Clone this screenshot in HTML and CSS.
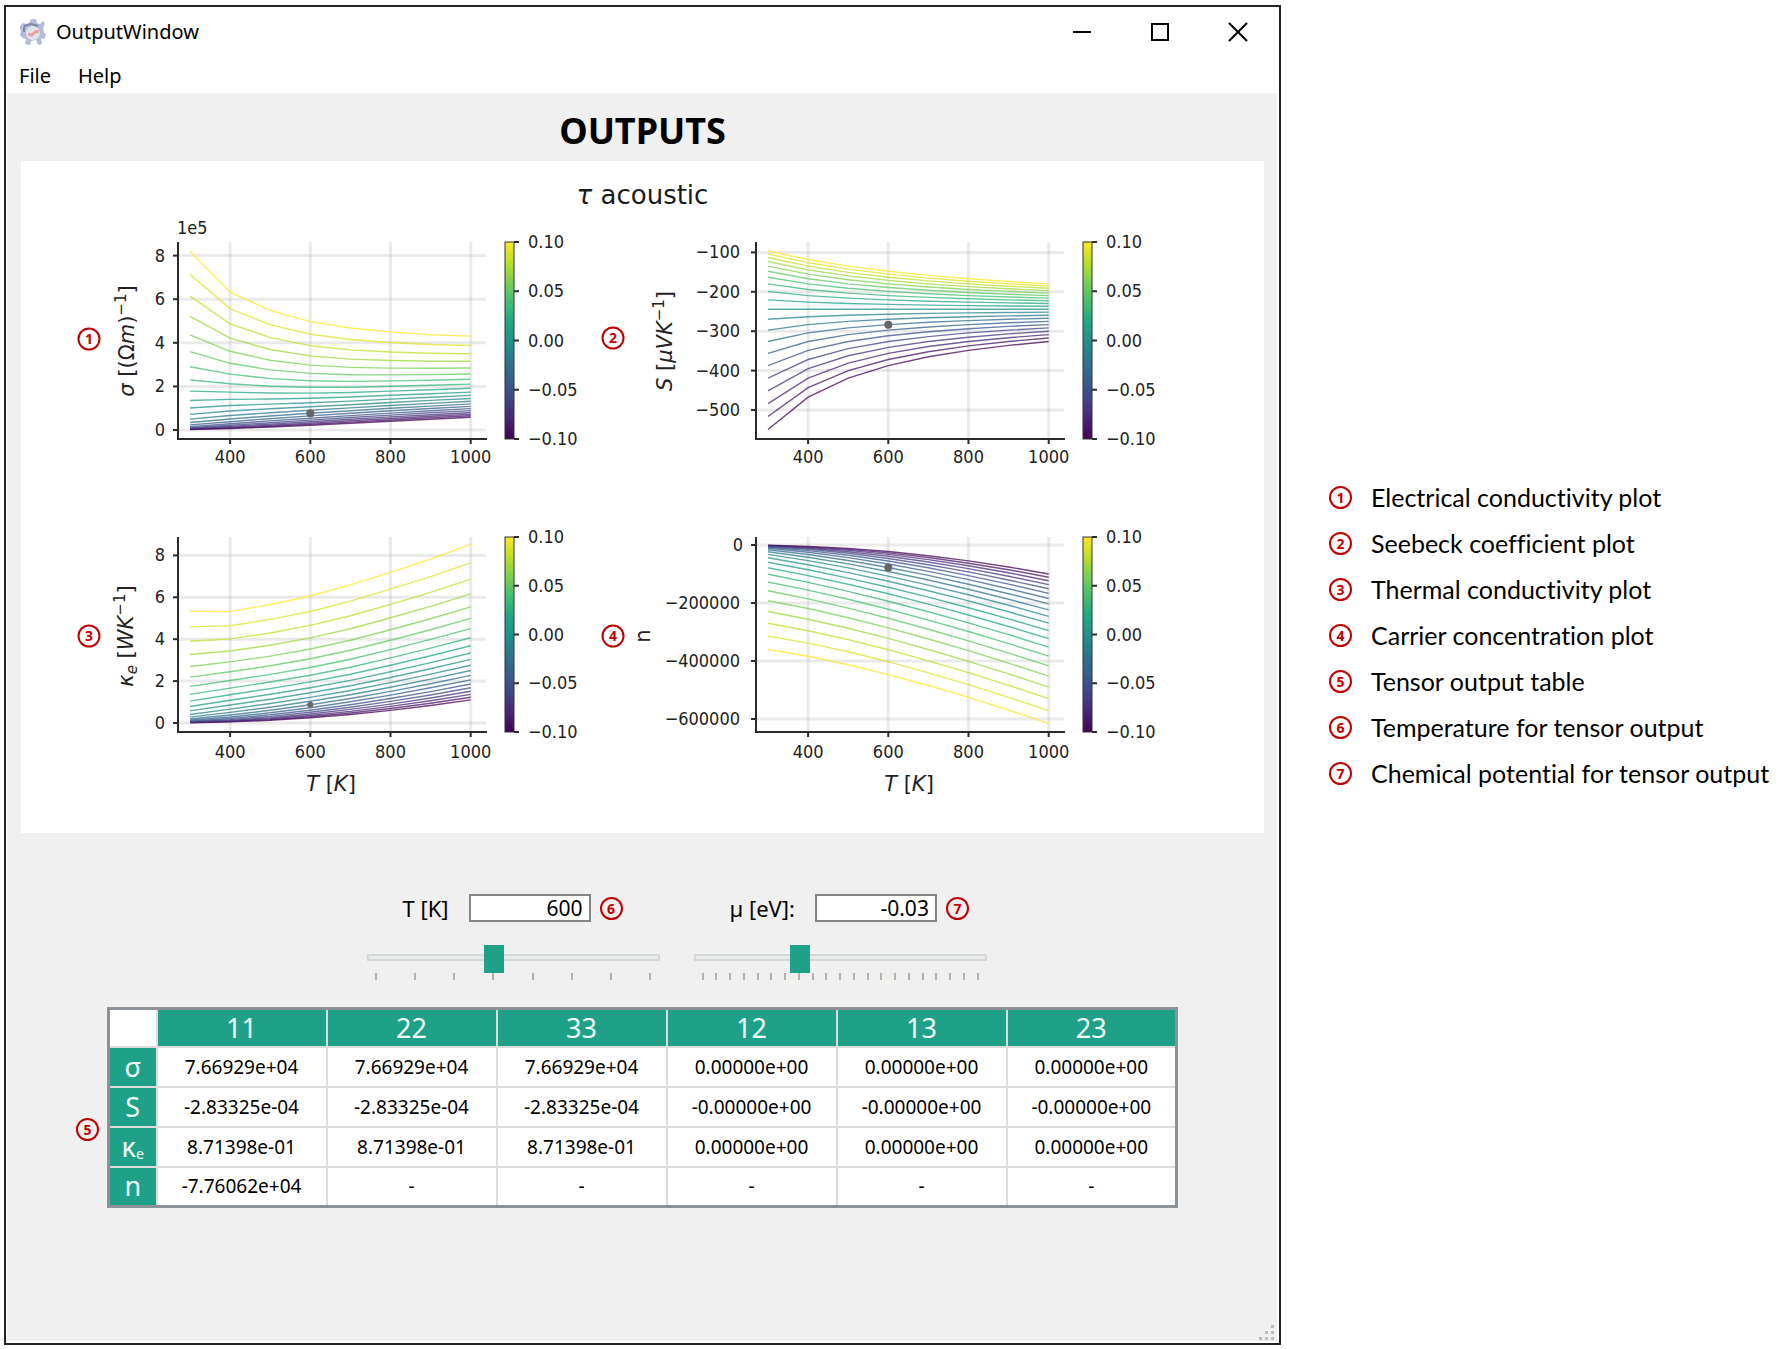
FILE: index.html
```html
<!DOCTYPE html>
<html lang="en">
<head>
<meta charset="utf-8">
<title>OutputWindow</title>
<link rel="stylesheet" href="styles.css">
</head>
<body>
<main class="page">
  <section class="window">
    <header class="titlebar">
      <svg class="app-icon" viewBox="0 0 26 26" aria-hidden="true">
        <path class="gear" d="M11 0h5l1 4 3 1 3-3 2 3-2 4 1 4 2 3-2 4-3-1 1 6-4 1-2-5-5 1-1 4-5-1 1-5-3-1-3-3 1-4-2-4 4-4 4 1 3-2z"/>
        <circle class="gear-core" cx="13" cy="14" r="7"/>
        <path class="gear-dark" d="M4 7l7-2 7 2M4 8v5"/>
        <path class="gear-mark" d="M8 15l4 1 3-3 4-1"/>
      </svg>
      <span class="window-title">OutputWindow</span>
      <div class="window-buttons">
        <button type="button" aria-label="Minimize"><svg viewBox="0 0 18 18"><path d="M0 9h18"/></svg></button>
        <button type="button" aria-label="Maximize"><svg viewBox="0 0 18 18"><path d="M1 1h16v16H1z"/></svg></button>
        <button type="button" aria-label="Close"><svg viewBox="0 0 18 18"><path d="M0 0l18 18M18 0L0 18"/></svg></button>
      </div>
    </header>
    <nav class="menubar">
      <button type="button">File</button>
      <button type="button">Help</button>
    </nav>
    <div class="content">
      <h1>OUTPUTS</h1>
      <section class="figure">
        <h2><i>τ</i> acoustic</h2>
        <div class="plots">
          <svg class="plot" id="sigma" viewBox="0 0 578 295"></svg>
          <svg class="plot" id="seebeck" viewBox="0 0 578 295"></svg>
          <svg class="plot" id="kappa" viewBox="0 0 578 295"></svg>
          <svg class="plot" id="carriers" viewBox="0 0 578 295"></svg>
        </div>
      </section>
      <section class="controls">
        <div class="control">
          <div class="field">
            <label for="temp">T [K]</label>
            <input class="value" id="temp" type="text" value="600">
            <span class="badge">6</span>
          </div>
          <input class="slider" type="range" min="300" max="1000" step="100" value="600" aria-label="Temperature">
          <div class="ticks" data-count="8"></div>
        </div>
        <div class="control">
          <div class="field">
            <label for="mu">µ [eV]:</label>
            <input class="value" id="mu" type="text" value="-0.03">
            <span class="badge">7</span>
          </div>
          <input class="slider" type="range" min="-10" max="10" step="1" value="-3" aria-label="Chemical potential">
          <div class="ticks" data-count="21"></div>
        </div>
      </section>
      <section class="tensor">
        <span class="badge">5</span>
        <table>
          <thead>
            <tr><td></td><th scope="col">11</th><th scope="col">22</th><th scope="col">33</th><th scope="col">12</th><th scope="col">13</th><th scope="col">23</th></tr>
          </thead>
          <tbody>
            <tr><th scope="row">σ</th><td>7.66929e+04</td><td>7.66929e+04</td><td>7.66929e+04</td><td>0.00000e+00</td><td>0.00000e+00</td><td>0.00000e+00</td></tr>
            <tr><th scope="row">S</th><td>-2.83325e-04</td><td>-2.83325e-04</td><td>-2.83325e-04</td><td>-0.00000e+00</td><td>-0.00000e+00</td><td>-0.00000e+00</td></tr>
            <tr><th scope="row">κ<sub>e</sub></th><td>8.71398e-01</td><td>8.71398e-01</td><td>8.71398e-01</td><td>0.00000e+00</td><td>0.00000e+00</td><td>0.00000e+00</td></tr>
            <tr><th scope="row">n</th><td>-7.76062e+04</td><td>-</td><td>-</td><td>-</td><td>-</td><td>-</td></tr>
          </tbody>
        </table>
      </section>
      <svg class="grip" viewBox="0 0 15 15" aria-hidden="true"><path d="M12 0h3v3h-3zM12 6h3v3h-3zM6 6h3v3H6zM12 12h3v3h-3zM6 12h3v3H6zM0 12h3v3H0z"/></svg>
    </div>
  </section>
  <ol class="legend">
    <li><span class="badge">1</span>Electrical conductivity plot</li>
    <li><span class="badge">2</span>Seebeck coefficient plot</li>
    <li><span class="badge">3</span>Thermal conductivity plot</li>
    <li><span class="badge">4</span>Carrier concentration plot</li>
    <li><span class="badge">5</span>Tensor output table</li>
    <li><span class="badge">6</span>Temperature for tensor output</li>
    <li><span class="badge">7</span>Chemical potential for tensor output</li>
  </ol>
</main>
<script src="plots.js"></script>
</body>
</html>
```
FILE: styles.css
```css
* { box-sizing: border-box; }
body {
  margin: 0;
  background: #fff;
  color: #000;
  font-family: "Noto Sans", "Open Sans", sans-serif;
}
button { border: 0; padding: 0; background: none; font: inherit; color: inherit; }

.page {
  display: flex;
  align-items: stretch;
  gap: 48px;
  min-height: 100vh;
  padding: 5px 0 4px 4px;
}

/* application window */
.window {
  flex: 1;
  display: flex;
  flex-direction: column;
  border: 2px solid #232427;
  padding: 0 2px 2px 1px;
}
.titlebar { display: flex; align-items: center; height: 49px; padding-left: 13px; }
.app-icon { width: 26px; height: 26px; margin-right: 10px; }
.gear { fill: #b4bbdc; }
.gear-core { fill: #e4e4ee; }
.gear-dark { fill: none; stroke: #7f869c; stroke-width: 2; }
.gear-mark { fill: none; stroke: #eba59d; stroke-width: 3; }
.window-title { flex: 1; font-size: 20px; }
.window-buttons { display: flex; }
.window-buttons button { display: grid; place-items: center; width: 78px; height: 49px; }
.window-buttons svg { width: 18px; height: 18px; overflow: visible; fill: none; stroke: #000; stroke-width: 2; }
.menubar { display: flex; gap: 27px; height: 37px; padding: 2px 0 0 12px; font-size: 20px; }

.content {
  position: relative;
  flex: 1;
  padding: 0 13px 0 14px;
  background: #f0f0f0;
}
h1 {
  margin: 0;
  padding-top: 6px;
  height: 68px;
  font-size: 36px;
  line-height: 64px;
  text-align: center;
}

/* matplotlib figure */
.figure { background: #fff; padding-bottom: 27px; }
h2 {
  margin: 0;
  height: 55px;
  padding-top: 4px;
  font: 26px/60px "DejaVu Sans", sans-serif;
  color: #1a1a1a;
  text-align: center;
}
.plots { display: grid; grid-template-columns: 1fr 1fr; padding-right: 7%; }
.plot { display: block; width: 100%; overflow: visible; font-family: "DejaVu Sans", sans-serif; fill: #222; }
.grid-line { stroke: #b0b0b0; stroke-opacity: 0.27; stroke-width: 3; }
.axis { fill: none; stroke: #2b2b2b; stroke-width: 2; }
.curve { fill: none; stroke-width: 1.4; stroke-opacity: 0.75; }
.marker { fill: #666; }
.tick-text { font-family: "DejaVu Sans Condensed", "DejaVu Sans", sans-serif; font-size: 18px; }
.axis-text { font-size: 21px; }
.small { font-size: 15px; }
.italic { font-style: italic; }
.end { text-anchor: end; }
.middle { text-anchor: middle; }
.ring { fill: none; stroke: #c00000; stroke-width: 2; }
.ring-text { fill: #c00000; font: bold 14px "Noto Sans", sans-serif; text-anchor: middle; }

.badge {
  flex: none;
  width: 23px;
  height: 23px;
  border: 2px solid #c00000;
  border-radius: 50%;
  color: #c00000;
  font: bold 14px/19px "Noto Sans", sans-serif;
  text-align: center;
}

/* sliders */
.controls { display: flex; justify-content: center; gap: 34px; padding: 61px 0 0 68px; }
.control { width: 293px; }
.field { display: flex; align-items: center; height: 28px; padding-left: 36px; font-size: 22px; }
.field label { margin-right: 20px; white-space: nowrap; }
.field .badge { margin-left: 9px; }
.value {
  width: 122px;
  height: 28px;
  padding: 0 6px;
  border: 2px solid #858585;
  background: #fff;
  font: 21px "Noto Sans", sans-serif;
  text-align: right;
}
.slider {
  appearance: none;
  display: block;
  width: 100%;
  height: 28px;
  margin: 21px 0 2px;
  background: none;
}
.slider::-webkit-slider-runnable-track { height: 7px; border: 2px solid #d6d8d7; background: #e7eaea; }
.slider::-webkit-slider-thumb { appearance: none; width: 20px; height: 28px; margin-top: -11px; background: #1fa187; }
.ticks { display: flex; justify-content: space-between; padding: 0 8px; }
.ticks i { width: 2px; height: 7px; background: #b5b3a6; }

/* tensor table */
.tensor { display: flex; align-items: center; gap: 8px; padding: 27px 86px 0 55px; }
.tensor .badge { margin-top: 44px; }
table { width: 100%; border-collapse: collapse; table-layout: fixed; border: 3px solid #8d9298; background: #fff; }
td, th { height: 40px; padding: 0; border: 2px solid #dcdcdc; text-align: center; font-weight: normal; }
td { font-size: 19px; }
th { background: #1fa187; color: #f2fffa; font-size: 27px; line-height: 30px; }
thead th, thead td { height: 38px; }
tr > :first-child { width: 48px; }
sub { font-size: 14px; line-height: 0; vertical-align: -2px; }
.grip { position: absolute; right: 3px; bottom: 1px; width: 15px; fill: #bdbdbd; }

/* legend */
.legend {
  width: 458px;
  margin: 0;
  padding: 469px 0 0;
  list-style: none;
  font: 25px Lato, sans-serif;
  font-variant-ligatures: none;
}
.legend li { display: flex; align-items: center; gap: 19px; height: 46px; white-space: nowrap; }
```
FILE: plots.js
```js
const NS = 'http://www.w3.org/2000/svg';
const K_B = 8.617333e-5;
const VIRIDIS = ['#440154', '#482475', '#414487', '#355f8d', '#2a788e', '#21918c', '#22a884', '#44bf70', '#7ad151', '#bddf26', '#fde725'];

// Relaxation-time enhancement for T = 300, 400, ... 1000 K: constant part and part quadratic in mu
const TAU_CONST = [0.16, 0.12, 0.06, 0.02, 0, 0, 0, 0];
const TAU_QUAD = [0, 0, 7, 11.5, 15, 16.5, 17.5, 19];

// Fermi-Dirac integral of order j
function fermi(j, eta) {
  let sum = 0;
  const h = 0.02;
  for (let u = h; u < 6.5; u += h) {
    const x = u * u;
    sum += 2 * u * Math.pow(x, j) / (1 + Math.exp(x - eta)) * h;
  }
  return sum;
}

function tau(T, mu) {
  const i = T / 100 - 3;
  const fade = Math.max(0, Math.min(1, 1 + mu * 20));
  const up = Math.max(0, mu);
  return (1 + TAU_CONST[i] * fade + TAU_QUAD[i] * up * up) / Math.sqrt(T);
}

function transport(T, mu) {
  const eta = mu / (K_B * T);
  const f = fermi(0.5, eta);
  const a = (5 / 3) * fermi(1.5, eta) / f;
  const b = (7 / 3) * fermi(2.5, eta) / f;
  const sigma = T * tau(T, mu) * f;
  return { sigma, seebeck: -86.17 * (a - eta), kappa: sigma * T * (b - a * a), carriers: -Math.pow(T, 1.5) * f };
}

const ref = transport(600, -0.03);
const scale = { sigma: 0.766929 / ref.sigma, seebeck: 1, kappa: 0.871398 / ref.kappa, carriers: 77606.2 / -ref.carriers };

function el(parent, name, attrs, text) {
  const node = document.createElementNS(NS, name);
  for (const key in attrs) node.setAttribute(key, attrs[key]);
  if (text !== undefined) node.textContent = text;
  parent.appendChild(node);
  return node;
}

function viridis(t) {
  const p = Math.min(t * 10, 9.9999);
  const i = Math.floor(p);
  const rgb = c => [1, 3, 5].map(k => parseInt(c.slice(k, k + 2), 16));
  const a = rgb(VIRIDIS[i]);
  const b = rgb(VIRIDIS[i + 1]);
  return 'rgb(' + a.map((v, k) => Math.round(v + (b[k] - v) * (p - i))).join(',') + ')';
}

function draw(id, o) {
  const svg = document.getElementById(id);
  const top = 26;
  const x = T => 169 + (T - 300) * 0.401;
  const y = v => o.zero - v * o.unit;

  for (const T of [400, 600, 800, 1000]) el(svg, 'line', { class: 'grid-line', x1: x(T), x2: x(T), y1: top, y2: o.bottom });
  for (const v of o.ticks) el(svg, 'line', { class: 'grid-line', x1: 157, x2: 465, y1: y(v), y2: y(v) });

  for (let i = 0; i <= 20; i++) {
    const mu = -0.1 + i * 0.01;
    const points = [];
    for (let T = 300; T <= 1000; T += 100) points.push(x(T).toFixed(1) + ',' + y(transport(T, mu)[id] * scale[id]).toFixed(1));
    el(svg, 'polyline', { class: 'curve', stroke: viridis(i / 20), points: points.join(' ') });
  }
  el(svg, 'circle', { class: 'marker', cx: x(600), cy: y(ref[id] * scale[id]), r: o.marker || 4 });

  el(svg, 'path', { class: 'axis', d: `M157 ${top}V${o.bottom}H466` });
  for (const T of [400, 600, 800, 1000]) {
    el(svg, 'path', { class: 'axis', d: `M${x(T)} ${o.bottom}v5` });
    el(svg, 'text', { class: 'tick-text middle', x: x(T), y: 247 }, T);
  }
  for (const v of o.ticks) {
    el(svg, 'path', { class: 'axis', d: `M157 ${y(v)}h-5` });
    el(svg, 'text', { class: 'tick-text end', x: v < 0 ? 141 : 144, y: y(v) + 6 }, String(v).replace('-', '−'));
  }

  const gradient = el(el(svg, 'defs', {}), 'linearGradient', { id: 'bar-' + id, x1: 0, x2: 0, y1: 1, y2: 0 });
  VIRIDIS.forEach((c, i) => el(gradient, 'stop', { offset: i / 10, 'stop-color': c }));
  el(svg, 'rect', { x: 484, y: top, width: 9, height: o.bottom - top, fill: `url(#bar-${id})`, stroke: '#333' });
  ['0.10', '0.05', '0.00', '−0.05', '−0.10'].forEach((label, i) => {
    const ty = top + (o.bottom - top) * i / 4;
    el(svg, 'path', { class: 'axis', d: `M493 ${ty}h5` });
    el(svg, 'text', { class: 'tick-text', x: 507, y: ty + 6 }, label);
  });

  const label = el(svg, 'text', { class: 'axis-text middle', transform: `translate(${o.labelX} 125) rotate(-90)` });
  for (const [text, cls, dy] of o.label) el(label, 'tspan', { class: cls, dy: dy || 0 }, text);

  if (o.xLabel) {
    const t = el(svg, 'text', { class: 'axis-text middle', x: 310, y: 280 });
    for (const [text, cls] of [['T', 'italic'], [' [', ''], ['K', 'italic'], [']', '']]) el(t, 'tspan', { class: cls }, text);
  }
  if (o.offset) el(svg, 'text', { class: 'tick-text', x: 156, y: 18 }, o.offset);

  el(svg, 'circle', { class: 'ring', cx: o.badgeX, cy: o.badgeY, r: 10.5 });
  el(svg, 'text', { class: 'ring-text', x: o.badgeX, y: o.badgeY + 5 }, o.badge);
}

draw('sigma', {
  zero: 214, unit: 21.8, bottom: 223, ticks: [0, 2, 4, 6, 8], offset: '1e5', badge: 1, badgeX: 68, badgeY: 123, labelX: 113,
  label: [['σ', 'italic'], [' [(Ω', ''], ['m', 'italic'], [')', ''], ['−1', 'small', -8], [']', '', 8]]
});
draw('seebeck', {
  zero: -3, unit: 0.394, bottom: 223, ticks: [-100, -200, -300, -400, -500], badge: 2, badgeX: 14, badgeY: 122, labelX: 73,
  label: [['S', 'italic'], [' [', ''], ['μVK', 'italic'], ['−1', 'small', -8], [']', '', 8]]
});
draw('kappa', {
  zero: 212, unit: 20.95, bottom: 221, ticks: [0, 2, 4, 6, 8], marker: 3, xLabel: true, badge: 3, badgeX: 68, badgeY: 125, labelX: 112,
  label: [['κ', 'italic'], ['e', 'small italic', 4], [' [', '', -4], ['WK', 'italic'], ['−1', 'small', -8], [']', '', 8]]
});
draw('carriers', {
  zero: 34, unit: 0.00029, bottom: 221, ticks: [0, -200000, -400000, -600000], xLabel: true, badge: 4, badgeX: 14, badgeY: 125, labelX: 51,
  label: [['n', '']]
});

document.querySelectorAll('.ticks').forEach(row => {
  for (let i = 0; i < Number(row.dataset.count); i++) row.appendChild(document.createElement('i'));
});
```
